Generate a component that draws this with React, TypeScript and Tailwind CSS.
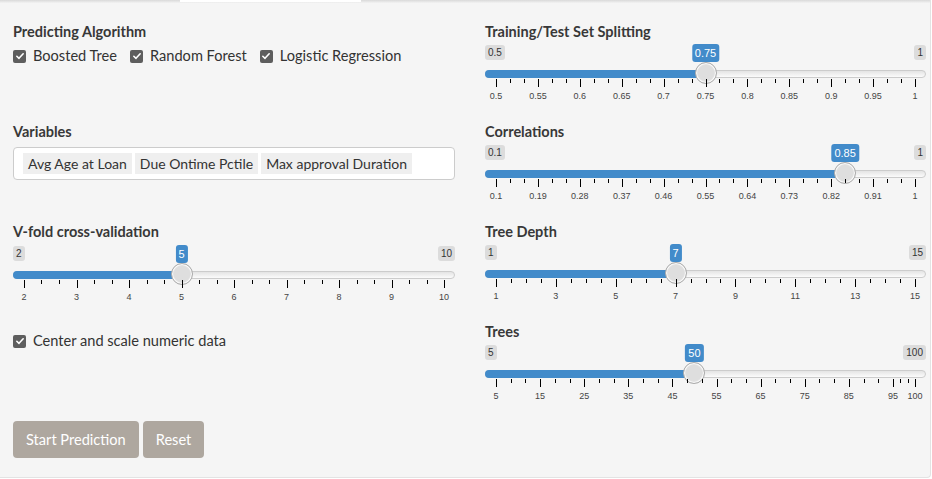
import React from "react";

type SliderProps = {
  min: number;
  max: number;
  value: number;
  labels: number[];
  minors: number;
};

const uiFont = { fontFamily: "Lato, 'Open Sans', sans-serif" };
const irsFont = { fontFamily: "'Liberation Sans', Arial, sans-serif" };

function pos(pct: number) {
  return `calc(11px + ${pct} * (100% - 22px))`;
}

function Slider({ min, max, value, labels, minors }: SliderProps) {
  const p = (value - min) / (max - min);
  const ticks: { pct: number; big: boolean }[] = [];
  labels.forEach((l, i) => {
    const cur = (l - min) / (max - min);
    if (i > 0) {
      const prev = (labels[i - 1] - min) / (max - min);
      for (let z = 1; z <= minors; z++) {
        ticks.push({ pct: prev + ((cur - prev) * z) / (minors + 1), big: false });
      }
    }
    ticks.push({ pct: cur, big: true });
  });

  return (
    <div className="relative h-[60px] w-full" style={irsFont}>
      <span className="absolute left-0 top-0 rounded-[3px] bg-black/10 px-[3px] py-px text-[10px] leading-[1.333] text-[#333]">
        {min}
      </span>
      <span className="absolute right-0 top-0 rounded-[3px] bg-black/10 px-[3px] py-px text-[10px] leading-[1.333] text-[#333]">
        {max}
      </span>
      <span
        className="absolute top-[-1px] -translate-x-1/2 rounded-[3px] bg-[#428bca] px-[3px] py-px text-[11px] leading-[16px] text-white"
        style={{ left: pos(p) }}
      >
        {value}
      </span>
      {/* track */}
      <div className="absolute left-0 right-0 top-[25px] h-[8px] rounded-full border border-[#cccccc] bg-gradient-to-b from-[#e4e4e4] to-[#fbfbfb]" />
      <div
        className="absolute left-0 top-[25px] h-[8px] rounded-l-full bg-[#428bca]"
        style={{ width: pos(p) }}
      />
      <div
        className="absolute top-[17px] h-[22px] w-[22px] -translate-x-1/2 rounded-full border border-[#ababab] bg-[#dedede] shadow-[inset_0_0_1px_1px_#fff]"
        style={{ left: pos(p) }}
      />
      {/* grid */}
      <div className="absolute left-[11px] right-[11px] top-[34px] h-[26px]">
        {ticks.map((t, i) => (
          <span
            key={i}
            className={`absolute top-0 w-px bg-black ${t.big ? "h-[8px]" : "h-[4px]"}`}
            style={{ left: `${t.pct * 100}%` }}
          />
        ))}
        {labels.map((l) => (
          <span
            key={l}
            className="absolute top-[12px] -translate-x-1/2 whitespace-nowrap text-[9px] leading-[10px] text-[#444]"
            style={{ left: `${((l - min) / (max - min)) * 100}%` }}
          >
            {l}
          </span>
        ))}
      </div>
    </div>
  );
}

function Check({ label }: { label: string }) {
  return (
    <label className="flex items-center gap-[7px] text-[14.6px] text-[#333]">
      <span className="flex h-[13px] w-[13px] items-center justify-center rounded-[2px] bg-[#5e5e5e]">
        <svg viewBox="0 0 12 12" className="h-[10px] w-[10px]">
          <path d="M2.2 6.3 L4.8 8.8 L9.8 3.4" fill="none" stroke="#fff" strokeWidth="1.9" strokeLinecap="round" strokeLinejoin="round" />
        </svg>
      </span>
      {label}
    </label>
  );
}

function Title({ children }: { children: React.ReactNode }) {
  return <div className="h-[20px] text-[14.5px] font-bold leading-[20px] text-[#383838]">{children}</div>;
}

const range = (a: number, b: number, s: number) => {
  const out: number[] = [];
  for (let v = a; v <= b + 1e-9; v += s) out.push(Math.round(v * 100) / 100);
  return out;
};

export default function App() {
  return (
    <div className="h-[479px] w-[932px] overflow-hidden bg-white" style={uiFont}>
      <div className="h-[478px] w-[931px] rounded-br-[4px] border-b border-r border-[#e3e3e3] bg-[#f5f5f5]">
        {/* top edge of tab bar */}
        <div className="h-[3px] bg-gradient-to-b from-[#d9d9d9] to-[#f3f3f3]">
          <div className="ml-[180px] h-[2px] w-[181px] bg-white" />
        </div>

        <div className="grid grid-cols-[442px_441px] gap-x-[30px] pl-[13px] pt-[19px]">
          {/* left column */}
          <div className="flex flex-col">
            <div className="h-[100px]">
              <Title>Predicting Algorithm</Title>
              <div className="mt-[4px] flex h-[20px] items-center gap-[13px]">
                <Check label="Boosted Tree" />
                <Check label="Random Forest" />
                <Check label="Logistic Regression" />
              </div>
            </div>
            <div className="h-[100px]">
              <Title>Variables</Title>
              <div className="mt-[5px] flex h-[33px] gap-[3px] rounded-[4px] border border-[#cccccc] bg-white pl-[9px] pt-[5px] text-[14px] text-[#333]">
                <span className="h-[21px] bg-[#efefef] px-[5px] leading-[21px]">Avg Age at Loan</span>
                <span className="h-[21px] bg-[#efefef] px-[5px] leading-[21px]">Due Ontime Pctile</span>
                <span className="h-[21px] bg-[#efefef] px-[5px] leading-[21px]">Max approval Duration</span>
              </div>
            </div>
            <div className="h-[100px]">
              <Title>V-fold cross-validation</Title>
              <div className="mt-[4px]">
                <Slider min={2} max={10} value={5} labels={range(2, 10, 1)} minors={2} />
              </div>
            </div>
            <div className="mt-[9px] flex h-[20px] items-center">
              <Check label="Center and scale numeric data" />
            </div>
            <div className="mt-[70px] flex gap-[4px]">
              <button className="h-[37px] rounded-[4px] bg-[#aea79f] px-[13px] text-[14.6px] text-white">
                Start Prediction
              </button>
              <button className="h-[37px] rounded-[4px] bg-[#aea79f] px-[13px] text-[14.6px] text-white">
                Reset
              </button>
            </div>
          </div>

          {/* right column */}
          <div className="flex flex-col">
            <div className="h-[100px]">
              <Title>Training/Test Set Splitting</Title>
              <div className="mt-[3px]">
                <Slider min={0.5} max={1} value={0.75} labels={range(0.5, 1, 0.05)} minors={2} />
              </div>
            </div>
            <div className="h-[100px]">
              <Title>Correlations</Title>
              <div className="mt-[3px]">
                <Slider min={0.1} max={1} value={0.85} labels={range(0.1, 1, 0.09)} minors={2} />
              </div>
            </div>
            <div className="h-[100px]">
              <Title>Tree Depth</Title>
              <div className="mt-[3px]">
                <Slider min={1} max={15} value={7} labels={range(1, 15, 2)} minors={3} />
              </div>
            </div>
            <div className="h-[100px]">
              <Title>Trees</Title>
              <div className="mt-[3px]">
                <Slider min={5} max={100} value={50} labels={[...range(5, 95, 10), 100]} minors={2} />
              </div>
            </div>
          </div>
        </div>
      </div>
    </div>
  );
}
